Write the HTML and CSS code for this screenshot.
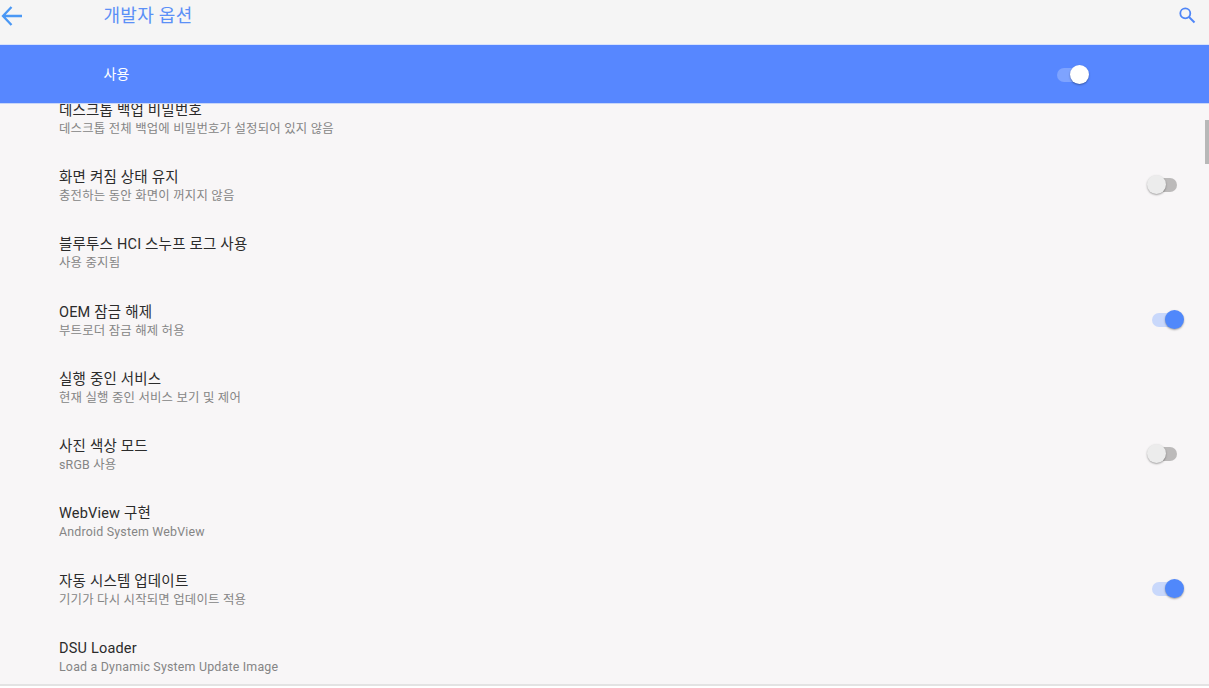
FILE: index.html
```html
<!DOCTYPE html>
<html lang="ko">
<head>
<meta charset="utf-8">
<title>개발자 옵션</title>
<link rel="stylesheet" href="styles.css">
</head>
<body>
<div class="app">
  <header class="topbar">
    <svg class="back" viewBox="0 0 24 24" width="24" height="24"><path d="M22 12H3.500M11.500 3L3 12l8.500 9" fill="none" stroke="#4a98f5" stroke-width="2.300"/></svg>
    <h1 class="title">개발자 옵션</h1>
    <svg class="search" viewBox="0 0 18 18" width="18" height="18"><circle cx="7.300" cy="7.300" r="5" fill="none" stroke="#4f86f7" stroke-width="1.800"/><path d="M11 11l5.500 5.500" stroke="#4f86f7" stroke-width="2" fill="none"/></svg>
  </header>
  <section class="master">
    <span class="master-label">사용</span>
    <span class="switch switch-master"><span class="track"></span><span class="thumb"></span></span>
  </section>
  <main class="list">
    <div class="list-inner">
      <div class="row"><div class="text"><div class="name">데스크톱 백업 비밀번호</div><div class="sub">데스크톱 전체 백업에 비밀번호가 설정되어 있지 않음</div></div></div>
      <div class="row"><div class="text"><div class="name">화면 켜짐 상태 유지</div><div class="sub">충전하는 동안 화면이 꺼지지 않음</div></div><span class="switch off"><span class="track"></span><span class="thumb"></span></span></div>
      <div class="row"><div class="text"><div class="name">블루투스 HCI 스누프 로그 사용</div><div class="sub">사용 중지됨</div></div></div>
      <div class="row"><div class="text"><div class="name">OEM 잠금 해제</div><div class="sub">부트로더 잠금 해제 허용</div></div><span class="switch on"><span class="track"></span><span class="thumb"></span></span></div>
      <div class="row"><div class="text"><div class="name">실행 중인 서비스</div><div class="sub">현재 실행 중인 서비스 보기 및 제어</div></div></div>
      <div class="row"><div class="text"><div class="name">사진 색상 모드</div><div class="sub">sRGB 사용</div></div><span class="switch off"><span class="track"></span><span class="thumb"></span></span></div>
      <div class="row"><div class="text"><div class="name">WebView 구현</div><div class="sub">Android System WebView</div></div></div>
      <div class="row"><div class="text"><div class="name">자동 시스템 업데이트</div><div class="sub">기기가 다시 시작되면 업데이트 적용</div></div><span class="switch on"><span class="track"></span><span class="thumb"></span></span></div>
      <div class="row"><div class="text"><div class="name">DSU Loader</div><div class="sub">Load a Dynamic System Update Image</div></div></div>
    </div>
    <div class="scrollbar"></div>
  </main>
  <div class="footer"></div>
</div>
</body>
</html>
```
FILE: styles.css
```css
* { box-sizing: border-box; }
html, body { margin: 0; height: 100%; overflow: hidden; }
body { font-family: Roboto, "Noto Sans CJK KR", sans-serif; background: #f8f6f7; }
.app { width: 1209px; height: 688px; display: flex; flex-direction: column; }

.topbar { height: 44px; flex: none; background: #f5f5f5; display: flex; align-items: flex-start; position: relative; }
.back { margin: 4px 0 0 0; flex: none; }
.title { margin: 4px 0 0 79.500px; font-size: 18px; font-weight: 400; line-height: 24px; color: #5b90f7; letter-spacing: .3px; flex: 1; }
.search { margin: 6px 13px 0 0; flex: none; }

.master { height: 60px; flex: none; background: #5787ff; border-top: 1px solid #d8e2fb; border-bottom: 1px solid #c8d6f8; padding: 0 120px 0 103.500px; display: flex; align-items: center; justify-content: space-between; position: relative; z-index: 1; }
.master-label { color: #fff; font-size: 14px; line-height: 20px; }

.list { flex: 1; min-height: 0; overflow: hidden; position: relative; }
.list-inner { margin-top: -20px; }
.row { height: 67.300px; padding: 0 25px 0 59px; display: flex; align-items: center; justify-content: space-between; }
.text { padding-top: 3px; }
.name { font-size: 14.500px; line-height: 19px; color: #2b2b2b; letter-spacing: .2px; }
.sub { font-size: 12.400px; line-height: 18px; color: #858585; letter-spacing: .2px; }

.switch { position: relative; display: block; width: 34px; height: 20px; flex: none; }
.track { position: absolute; left: 2px; right: 2px; top: 3px; height: 14px; border-radius: 7px; }
.thumb { position: absolute; top: 0; width: 19px; height: 19px; border-radius: 50%; box-shadow: 0 1px 2px rgba(0,0,0,.35); }
.on .track { background: #c9d8fb; }
.on .thumb { right: 0; background: #5088fb; }
.off { margin-right: 5px; width: 32px; }
.off .track { background: #bcbaba; }
.off .thumb { left: 0; background: #ececec; }
.switch-master { margin-top: 2px; }
.switch-master .track { background: #7ea3ff; }
.switch-master .thumb { right: 0; background: #fff; }

.scrollbar { position: absolute; right: 0; top: 16px; width: 4px; height: 44px; background: #b8b8b8; }
.footer { height: 4px; flex: none; border-top: 2px solid #e3e3e3; background: #fff; }
```
